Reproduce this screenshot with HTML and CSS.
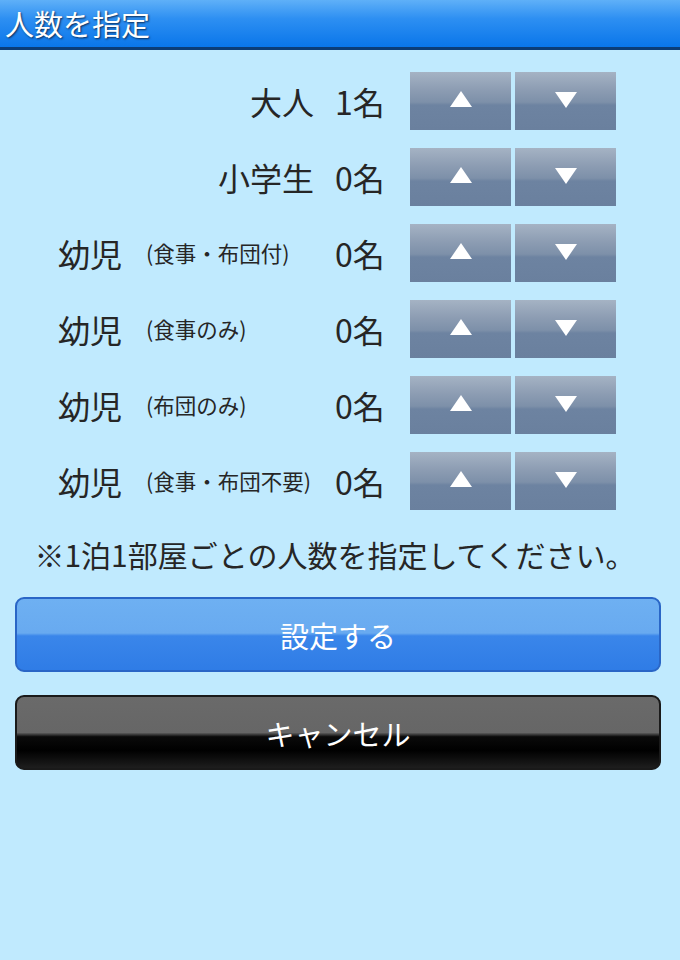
FILE: index.html
```html
<!DOCTYPE html>
<html lang="ja">
<head>
<meta charset="utf-8">
<title>人数を指定</title>
<link rel="stylesheet" href="styles.css">
</head>
<body>
<header class="titlebar">人数を指定</header>
<main class="content">
  <div class="rows">
    <div class="row">
      <div class="label label-right">大人</div>
      <div class="count">1名</div>
      <div class="stepper"><button class="step"><span class="tri up"></span></button><button class="step"><span class="tri down"></span></button></div>
    </div>
    <div class="row">
      <div class="label label-right">小学生</div>
      <div class="count">0名</div>
      <div class="stepper"><button class="step"><span class="tri up"></span></button><button class="step"><span class="tri down"></span></button></div>
    </div>
    <div class="row">
      <div class="label"><span class="main">幼児</span><span class="sub">(食事・布団付)</span></div>
      <div class="count">0名</div>
      <div class="stepper"><button class="step"><span class="tri up"></span></button><button class="step"><span class="tri down"></span></button></div>
    </div>
    <div class="row">
      <div class="label"><span class="main">幼児</span><span class="sub">(食事のみ)</span></div>
      <div class="count">0名</div>
      <div class="stepper"><button class="step"><span class="tri up"></span></button><button class="step"><span class="tri down"></span></button></div>
    </div>
    <div class="row">
      <div class="label"><span class="main">幼児</span><span class="sub">(布団のみ)</span></div>
      <div class="count">0名</div>
      <div class="stepper"><button class="step"><span class="tri up"></span></button><button class="step"><span class="tri down"></span></button></div>
    </div>
    <div class="row">
      <div class="label"><span class="main">幼児</span><span class="sub">(食事・布団不要)</span></div>
      <div class="count">0名</div>
      <div class="stepper"><button class="step"><span class="tri up"></span></button><button class="step"><span class="tri down"></span></button></div>
    </div>
  </div>
  <p class="note">※1泊1部屋ごとの人数を指定してください。</p>
  <div class="actions">
    <button class="btn btn-blue">設定する</button>
    <button class="btn btn-black">キャンセル</button>
  </div>
</main>
</body>
</html>
```
FILE: styles.css
```css
html, body {
  margin: 0;
  padding: 0;
}
body {
  width: 680px;
  height: 960px;
  background: #c0eafe;
  font-family: "Noto Sans CJK JP", "Noto Sans", sans-serif;
  color: #262626;
  overflow: hidden;
}
.titlebar {
  height: 50px;
  box-sizing: border-box;
  padding-left: 5px;
  background: linear-gradient(to bottom, #5fb0f8 0%, #2d8ff2 40%, #0a76ea 100%);
  border-bottom: 3px solid #0b3d78;
  color: #fff;
  font-size: 29px;
  line-height: 47px;
  text-shadow: 1px 1px 2px #0a2a55;
}
.content {
  padding-top: 22px;
}
.rows {
  display: flex;
  flex-direction: column;
  gap: 18px;
}
.row {
  display: flex;
  align-items: center;
  height: 58px;
  padding-left: 58px;
}
.label {
  width: 256px;
  display: flex;
  align-items: center;
  font-size: 32px;
  line-height: 40px;
}
.label-right {
  justify-content: flex-end;
}
.main {
  width: 88px;
  flex: none;
}
.sub {
  font-size: 21.5px;
  line-height: 30px;
  white-space: nowrap;
}
.count {
  width: 75px;
  margin-left: 21px;
  font-size: 32px;
  line-height: 40px;
}
.stepper {
  display: flex;
  gap: 4px;
}
.step {
  width: 101px;
  height: 58px;
  border: none;
  padding: 0;
  margin: 0;
  display: flex;
  align-items: center;
  justify-content: center;
  background: linear-gradient(to bottom, #a5b3c4 0%, #8d9db3 30%, #7d90a9 52%, #6d83a1 57%, #6a809e 100%);
}
.tri {
  display: block;
  width: 0;
  height: 0;
  border-left: 11px solid transparent;
  border-right: 11px solid transparent;
  margin-top: -4px;
}
.tri.up {
  border-bottom: 16px solid #fff;
}
.tri.down {
  border-top: 16px solid #fff;
  margin-top: -2px;
}
.note {
  margin: 22px 0 0 0;
  text-align: center;
  font-size: 30px;
  line-height: 44px;
  padding-right: 10px;
  white-space: nowrap;
}
.actions {
  display: flex;
  flex-direction: column;
  gap: 23px;
  padding: 21px 19px 0 15px;
}
.btn {
  height: 75px;
  border-radius: 9px;
  font-family: "Noto Sans CJK JP", "Noto Sans", sans-serif;
  font-size: 29px;
  color: #fff;
  padding: 0;
  margin: 0;
}
.btn-blue {
  border: 2px solid #2a66c6;
  background: linear-gradient(to bottom, #6eb0f2 0%, #68aaf0 48%, #3a86ea 52%, #2f7ce6 100%);
}
.btn-black {
  border: 2px solid #1a1a1a;
  background: linear-gradient(to bottom, #6a6a6a 0%, #666 50%, #0a0a0a 56%, #000 75%, #1e1e1e 100%);
}
```
